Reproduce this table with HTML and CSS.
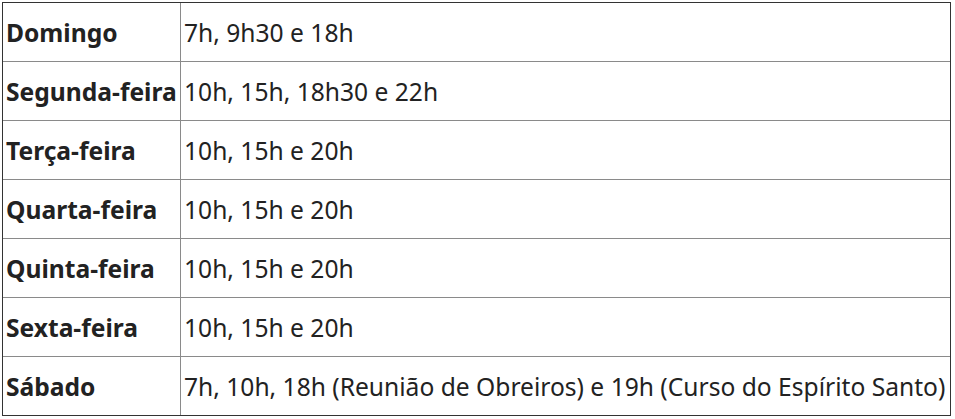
FILE: index.html
```html
<!DOCTYPE html>
<html lang="pt">
<head>
<meta charset="utf-8">
<link rel="stylesheet" href="styles.css">
</head>
<body>
<div class="wrap">
<table class="schedule">
<tbody>
<tr><th>Domingo</th><td>7h, 9h30 e 18h</td></tr>
<tr><th>Segunda-feira</th><td>10h, 15h, 18h30 e 22h</td></tr>
<tr><th>Terça-feira</th><td>10h, 15h e 20h</td></tr>
<tr><th>Quarta-feira</th><td>10h, 15h e 20h</td></tr>
<tr><th>Quinta-feira</th><td>10h, 15h e 20h</td></tr>
<tr><th>Sexta-feira</th><td>10h, 15h e 20h</td></tr>
<tr><th>Sábado</th><td>7h, 10h, 18h (Reunião de Obreiros) e 19h (Curso do Espírito Santo)</td></tr>
</tbody>
</table>
</div>
</body>
</html>
```
FILE: styles.css
```css
html, body {
  margin: 0;
  padding: 0;
  background: #fff;
}
.wrap {
  padding: 2px;
}
.schedule {
  width: 949px;
  border-collapse: separate;
  border-spacing: 0;
  border: 1px solid #333;
  font-family: "Noto Sans", "Open Sans", sans-serif;
  font-size: 24.6px;
  color: #222;
}
.schedule th,
.schedule td {
  height: 59px;
  padding: 0 3px;
  box-sizing: border-box;
  text-align: left;
  vertical-align: middle;
  border-bottom: 1px solid #8a8a8a;
  white-space: nowrap;
}
.schedule tr:last-child th,
.schedule tr:last-child td {
  height: 58px;
  border-bottom: none;
}
.schedule th {
  width: 178px;
  font-weight: 700;
  border-right: 1px solid #8a8a8a;
  padding-left: 3px;
  padding-right: 0;
}
.schedule td {
  font-weight: 400;
}
```
